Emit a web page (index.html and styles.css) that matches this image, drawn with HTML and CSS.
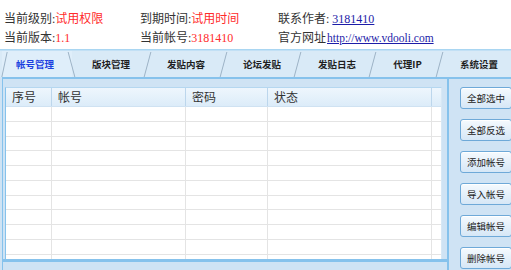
FILE: index.html
```html
<!DOCTYPE html>
<html>
<head>
<meta charset="utf-8">
<link rel="stylesheet" href="styles.css">
</head>
<body>
<div class="info">
  <div class="col c1">
    <div>当前级别<span class="lat">:</span><span class="red">试用权限</span></div>
    <div>当前版本<span class="lat">:</span><span class="red lat">1.1</span></div>
  </div>
  <div class="col c2">
    <div>到期时间<span class="lat">:</span><span class="red">试用时间</span></div>
    <div>当前帐号<span class="lat">:</span><span class="red lat">3181410</span></div>
  </div>
  <div class="col c3">
    <div>联系作者<span class="lat">: </span><a class="lnk lat" href="#">3181410</a></div>
    <div>官方网址<a class="lnk lat url" href="#">http://www.vdooli.com</a></div>
  </div>
</div>
<div class="ctl">
  <div class="tabs">
    <div class="tab active t1">帐号管理</div>
    <div class="tab t2">版块管理</div>
    <div class="tab t3">发贴内容</div>
    <div class="tab t4">论坛发贴</div>
    <div class="tab t5">发贴日志</div>
    <div class="tab t6">代理IP</div>
    <div class="tab t7 last">系统设置</div>
  </div>
  <div class="pane">
    <div class="left">
      <div class="list">
        <div class="row head">
          <div class="cell">序号</div>
          <div class="cell">帐号</div>
          <div class="cell">密码</div>
          <div class="cell">状态</div>
          <div class="cell end"></div>
        </div>
        <div class="row"><div class="cell"></div><div class="cell"></div><div class="cell"></div><div class="cell"></div><div class="cell end"></div></div>
        <div class="row"><div class="cell"></div><div class="cell"></div><div class="cell"></div><div class="cell"></div><div class="cell end"></div></div>
        <div class="row"><div class="cell"></div><div class="cell"></div><div class="cell"></div><div class="cell"></div><div class="cell end"></div></div>
        <div class="row"><div class="cell"></div><div class="cell"></div><div class="cell"></div><div class="cell"></div><div class="cell end"></div></div>
        <div class="row"><div class="cell"></div><div class="cell"></div><div class="cell"></div><div class="cell"></div><div class="cell end"></div></div>
        <div class="row"><div class="cell"></div><div class="cell"></div><div class="cell"></div><div class="cell"></div><div class="cell end"></div></div>
        <div class="row"><div class="cell"></div><div class="cell"></div><div class="cell"></div><div class="cell"></div><div class="cell end"></div></div>
        <div class="row"><div class="cell"></div><div class="cell"></div><div class="cell"></div><div class="cell"></div><div class="cell end"></div></div>
        <div class="row"><div class="cell"></div><div class="cell"></div><div class="cell"></div><div class="cell"></div><div class="cell end"></div></div>
        <div class="row"><div class="cell"></div><div class="cell"></div><div class="cell"></div><div class="cell"></div><div class="cell end"></div></div>
        <div class="row"><div class="cell"></div><div class="cell"></div><div class="cell"></div><div class="cell"></div><div class="cell end"></div></div>
      </div>
    </div>
    <div class="right">
      <button class="btn">全部选中</button>
      <button class="btn">全部反选</button>
      <button class="btn">添加帐号</button>
      <button class="btn">导入帐号</button>
      <button class="btn">编辑帐号</button>
      <button class="btn">删除帐号</button>
    </div>
  </div>
</div>
</body>
</html>
```

FILE: styles.css
```css
* { box-sizing: border-box; }
html, body { margin: 0; padding: 0; }
body {
  width: 511px;
  height: 270px;
  overflow: hidden;
  background: #ffffff;
  font-family: "Noto Sans CJK SC", sans-serif;
  color: #333333;
}
.info {
  height: 49px;
  display: flex;
  padding: 9px 0 0 4px;
  font-size: 12px;
  line-height: 17px;
  white-space: nowrap;
}
.col { display: flex; flex-direction: column; }
.c1 { width: 136px; }
.c2 { width: 138px; }
.lat { font-family: "Liberation Serif", serif; }
.red { color: #ff2b2b; }
.lnk { color: #1c1ca8; text-decoration: underline; }
.url { font-size: 11.5px; margin-left: 1px; }

.ctl {
  background: #cfe3f4;
  border-top: 1px solid #a9d6f2;
  height: 221px;
  display: flex;
  flex-direction: column;
}
.tabs {
  height: 27px;
  flex: none;
  display: flex;
  background: #d9eaf7;
  padding-left: 2px;
  border-top: 1px solid #c2e0f5;
}
.tab {
  position: relative;
  height: 100%;
  display: flex;
  align-items: center;
  justify-content: center;
  font-size: 9.5px;
  font-weight: bold;
  color: #1e1e1e;
  flex: none;
}
.tab::after {
  content: "";
  position: absolute;
  right: 0;
  top: 1px;
  bottom: 0;
  width: 0;
  border-right: 1px solid #9db3c6;
  transform: skewX(-15deg);
}
.tab.active::after { transform: skewX(15deg); }
.tab.active::before {
  content: "";
  position: absolute;
  left: 2px;
  top: 1px;
  bottom: 0;
  width: 0;
  border-left: 1px solid #9db3c6;
  transform: skewX(-12deg);
}
.tab.active { color: #1a3fe0; background: #dfeefa; }
.tab.last::after { display: none; }
.t1 { width: 70px; padding-right: 4px; }
.t2 { width: 76px; padding-left: 2px; }
.t3 { width: 76px; }
.t4 { width: 74px; padding-left: 2px; }
.t5 { width: 75px; padding-left: 3px; }
.t6 { width: 67px; padding-left: 2px; }
.t7 { width: 78px; }

.pane {
  flex: 1;
  display: flex;
  align-items: flex-start;
  border-top: 2px solid #86c2ec;
  margin-left: 2px;
  border-left: 1px solid #86c2ec;
}
.left {
  width: 444px;
  height: 183px;
  padding: 8px 0 0 2px;
  border-bottom: 3px solid #86c2ec;
}
.list {
  width: 437px;
  height: 172px;
  background: #ffffff;
  border-left: 1px solid #86c2ec;
  border-top: 1px solid #b5d7f0;
  border-right: 1px solid #d7e8f5;
  overflow: hidden;
}
.row {
  display: grid;
  grid-template-columns: 46px 134px 82px 164px 1fr;
  height: 14.75px;
  border-bottom: 1px solid #e4e4e4;
}
.row .cell { border-right: 1px solid #e4e4e4; }
.row .cell.end { border-right: none; }
.row.head {
  height: 19px;
  background: linear-gradient(#eef6fd, #dcecf9);
  border-bottom: 1px solid #cfe2f2;
}
.row.head .cell {
  font-size: 12px;
  line-height: 18px;
  padding-left: 6px;
  color: #333333;
  border-right: 1px solid #bcd6ec;
}
.row.head .cell.end { border-right: none; }
.right {
  flex: 1;
  align-self: stretch;
  border-left: 2px solid #86c2ec;
  padding: 8px 0 0 11px;
  display: flex;
  flex-direction: column;
  gap: 10px;
  overflow: hidden;
}
.btn {
  flex: none;
  width: 52px;
  height: 22px;
  padding: 0;
  border: 1px solid #6ea9d8;
  border-radius: 3px;
  background: linear-gradient(#f5fafe, #d6e7f6);
  font-family: "Noto Sans CJK SC", sans-serif;
  font-size: 9.5px;
  color: #222222;
  box-shadow: inset 0 1px 0 #ffffff;
}
```
